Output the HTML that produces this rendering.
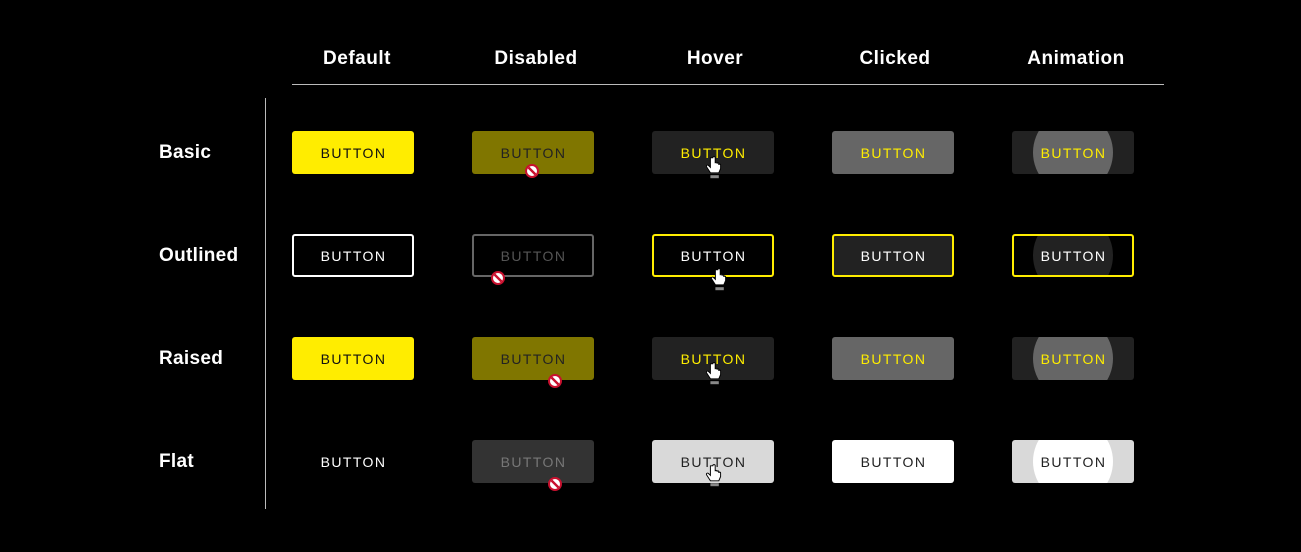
<!DOCTYPE html>
<html><head><meta charset="utf-8"><style>
body{margin:0;width:1301px;height:552px;background:#000;position:relative;overflow:hidden;font-family:"Liberation Sans",sans-serif}
.h{position:absolute;top:48px;width:160px;text-align:center;color:#fff;font-weight:bold;font-size:19px;letter-spacing:0.5px}
.r{position:absolute;left:159px;color:#fff;font-weight:bold;font-size:19px;letter-spacing:0.3px}
.b{position:absolute;width:122px;height:43px;border-radius:3px;box-sizing:border-box;overflow:hidden;text-align:center;line-height:45px;font-size:14px;letter-spacing:1.4px;padding-left:1px}
.b span{position:relative}
.c{position:absolute;left:21px;top:-20px;width:80px;height:83px;border-radius:50%}
.o{line-height:41px;border:2px solid}
.o .c{top:-22px;left:19px}
svg{position:absolute}
</style></head><body>
<div class="h" style="left:277px">Default</div>
<div class="h" style="left:456px">Disabled</div>
<div class="h" style="left:635px">Hover</div>
<div class="h" style="left:815px">Clicked</div>
<div class="h" style="left:996px">Animation</div>
<div style="position:absolute;left:292px;top:84px;width:872px;height:1px;background:#bbb"></div>
<div style="position:absolute;left:265px;top:98px;width:1px;height:411px;background:#bbb"></div>
<div class="r" style="top:142px">Basic</div>
<div class="r" style="top:245px">Outlined</div>
<div class="r" style="top:348px">Raised</div>
<div class="r" style="top:451px">Flat</div>

<!-- Basic -->
<div class="b" style="left:292px;top:131px;background:#ffed00;color:#111"><span>BUTTON</span></div>
<div class="b" style="left:472px;top:131px;background:#807600;color:#222"><span>BUTTON</span></div>
<div class="b" style="left:652px;top:131px;background:#222;color:#ffed00"><span>BUTTON</span></div>
<div class="b" style="left:832px;top:131px;background:#666;color:#ffed00"><span>BUTTON</span></div>
<div class="b" style="left:1012px;top:131px;background:#222;color:#ffed00"><div class="c" style="background:#666"></div><span>BUTTON</span></div>
<!-- Outlined -->
<div class="b o" style="left:292px;top:234px;border-color:#fff;color:#fff"><span>BUTTON</span></div>
<div class="b o" style="left:472px;top:234px;border-color:#666;color:#555"><span>BUTTON</span></div>
<div class="b o" style="left:652px;top:234px;border-color:#ffed00;color:#fff"><span>BUTTON</span></div>
<div class="b o" style="left:832px;top:234px;border-color:#ffed00;background:#222;color:#fff"><span>BUTTON</span></div>
<div class="b o" style="left:1012px;top:234px;border-color:#ffed00;color:#fff"><div class="c" style="background:#222"></div><span>BUTTON</span></div>
<!-- Raised -->
<div class="b" style="left:292px;top:337px;background:#ffed00;color:#111"><span>BUTTON</span></div>
<div class="b" style="left:472px;top:337px;background:#807600;color:#222"><span>BUTTON</span></div>
<div class="b" style="left:652px;top:337px;background:#222;color:#ffed00"><span>BUTTON</span></div>
<div class="b" style="left:832px;top:337px;background:#666;color:#ffed00"><span>BUTTON</span></div>
<div class="b" style="left:1012px;top:337px;background:#222;color:#ffed00"><div class="c" style="background:#666"></div><span>BUTTON</span></div>
<!-- Flat -->
<div class="b" style="left:292px;top:440px;color:#fff"><span>BUTTON</span></div>
<div class="b" style="left:472px;top:440px;background:#333;color:#777"><span>BUTTON</span></div>
<div class="b" style="left:652px;top:440px;background:#d9d9d9;color:#222"><span>BUTTON</span></div>
<div class="b" style="left:832px;top:440px;background:#fff;color:#222"><span>BUTTON</span></div>
<div class="b" style="left:1012px;top:440px;background:#d9d9d9;color:#222"><div class="c" style="background:#fff"></div><span>BUTTON</span></div>

<!-- no icons -->
<svg style="left:525px;top:164px" width="14" height="14" viewBox="0 0 14 14"><circle cx="7" cy="7" r="6" fill="#fff" stroke="#c8102e" stroke-width="2"/><line x1="3.5" y1="3.5" x2="10.5" y2="10.5" stroke="#c8102e" stroke-width="2.4"/></svg>
<svg style="left:491px;top:271px" width="14" height="14" viewBox="0 0 14 14"><circle cx="7" cy="7" r="6" fill="#fff" stroke="#c8102e" stroke-width="2"/><line x1="3.5" y1="3.5" x2="10.5" y2="10.5" stroke="#c8102e" stroke-width="2.4"/></svg>
<svg style="left:548px;top:374px" width="14" height="14" viewBox="0 0 14 14"><circle cx="7" cy="7" r="6" fill="#fff" stroke="#c8102e" stroke-width="2"/><line x1="3.5" y1="3.5" x2="10.5" y2="10.5" stroke="#c8102e" stroke-width="2.4"/></svg>
<svg style="left:548px;top:477px" width="14" height="14" viewBox="0 0 14 14"><circle cx="7" cy="7" r="6" fill="#fff" stroke="#c8102e" stroke-width="2"/><line x1="3.5" y1="3.5" x2="10.5" y2="10.5" stroke="#c8102e" stroke-width="2.4"/></svg>

<!-- hand cursors -->
<svg style="left:705px;top:156px" width="18" height="24" viewBox="0 0 14 20"><path d="M4 1.5v8l-1.5-1.5c-1-1-2.5 0-1.5 1.3L4 14h7l1.5-3.5V7.5c0-1-1.5-1-1.5 0v-1c0-1-1.5-1-1.5 0v-0.5c0-1-1.5-1-1.5 0V1.5c0-1.3-2-1.3-2 0z" fill="#fff" stroke="#000" stroke-width="0.8"/><rect x="4" y="16" width="7" height="2.5" fill="#888"/></svg>
<svg style="left:710px;top:268px" width="18" height="24" viewBox="0 0 14 20"><path d="M4 1.5v8l-1.5-1.5c-1-1-2.5 0-1.5 1.3L4 14h7l1.5-3.5V7.5c0-1-1.5-1-1.5 0v-1c0-1-1.5-1-1.5 0v-0.5c0-1-1.5-1-1.5 0V1.5c0-1.3-2-1.3-2 0z" fill="#fff" stroke="#000" stroke-width="0.8"/><rect x="4" y="16" width="7" height="2.5" fill="#888"/></svg>
<svg style="left:705px;top:362px" width="18" height="24" viewBox="0 0 14 20"><path d="M4 1.5v8l-1.5-1.5c-1-1-2.5 0-1.5 1.3L4 14h7l1.5-3.5V7.5c0-1-1.5-1-1.5 0v-1c0-1-1.5-1-1.5 0v-0.5c0-1-1.5-1-1.5 0V1.5c0-1.3-2-1.3-2 0z" fill="#fff" stroke="#000" stroke-width="0.8"/><rect x="4" y="16" width="7" height="2.5" fill="#888"/></svg>
<svg style="left:705px;top:464px" width="18" height="24" viewBox="0 0 14 20"><path d="M4 1.5v8l-1.5-1.5c-1-1-2.5 0-1.5 1.3L4 14h7l1.5-3.5V7.5c0-1-1.5-1-1.5 0v-1c0-1-1.5-1-1.5 0v-0.5c0-1-1.5-1-1.5 0V1.5c0-1.3-2-1.3-2 0z" fill="#fff" stroke="#000" stroke-width="0.8"/><rect x="4" y="16" width="7" height="2.5" fill="#888"/></svg>
</body></html>
